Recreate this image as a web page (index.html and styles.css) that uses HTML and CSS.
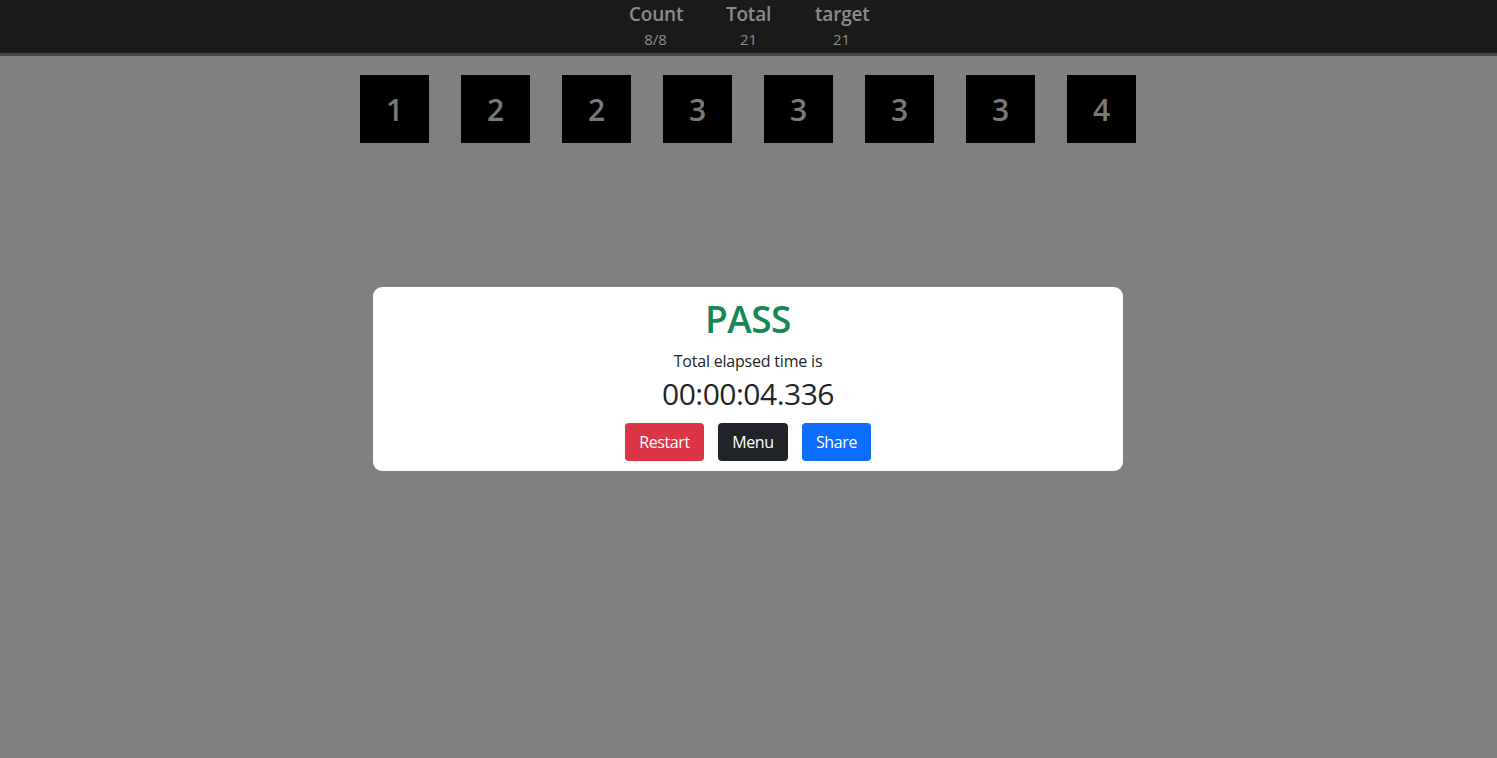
FILE: index.html
```html
<!DOCTYPE html>
<html lang="en">
<head>
    <meta charset="UTF-8">
    <meta name="viewport" content="width=device-width, initial-scale=1.0">
    <title>Count Game</title>
    <link rel="stylesheet" href="styles.css">
</head>
<body>
    <div class="topbar">
        <div class="stat">
            <div class="stat-title">Count</div>
            <div class="stat-value">8/8</div>
        </div>
        <div class="stat">
            <div class="stat-title">Total</div>
            <div class="stat-value">21</div>
        </div>
        <div class="stat">
            <div class="stat-title">target</div>
            <div class="stat-value">21</div>
        </div>
    </div>

    <div class="board">
        <div class="tile">1</div>
        <div class="tile">2</div>
        <div class="tile">2</div>
        <div class="tile">3</div>
        <div class="tile">3</div>
        <div class="tile">3</div>
        <div class="tile">3</div>
        <div class="tile">4</div>
    </div>

    <div class="backdrop">
        <div class="result">
            <h2 class="result-title">PASS</h2>
            <p class="result-label">Total elapsed time is</p>
            <div class="result-time">00:00:04.336</div>
            <div class="actions">
                <button class="btn btn-red">Restart</button>
                <button class="btn btn-dark">Menu</button>
                <button class="btn btn-blue">Share</button>
            </div>
        </div>
    </div>
</body>
</html>
```

FILE: styles.css
```css
body {
    margin: 0;
    background: #808080;
    font-family: "Open Sans", "Noto Sans", sans-serif;
    height: 758px;
    overflow: hidden;
}
.topbar {
    background: #1a1a1a;
    height: 53px;
    border-bottom: 3px solid #464646;
    display: flex;
    justify-content: center;
    gap: 40px;
}
.stat {
    width: 53px;
    text-align: center;
    color: #8c8c8c;
}
.stat-title {
    font-size: 19px;
    font-weight: 600;
    line-height: 26px;
    margin-top: 1px;
    letter-spacing: -0.2px;
}
.stat-value {
    font-size: 15px;
    line-height: 24px;
}
.board {
    display: flex;
    justify-content: center;
    gap: 32px;
    margin-top: 19px;
    padding-right: 1px;
}
.tile {
    width: 69px;
    height: 68px;
    background: #000;
    color: #7a7a7a;
    font-size: 30px;
    font-weight: 600;
    display: flex;
    align-items: center;
    justify-content: center;
}
.backdrop {
    display: flex;
    justify-content: center;
    margin-top: 144px;
    padding-right: 1px;
}
.result {
    width: 750px;
    height: 184px;
    background: #fff;
    border-radius: 9px;
    text-align: center;
    color: #212529;
    box-sizing: border-box;
    padding-top: 9px;
}
.result-title {
    margin: 0;
    color: #198754;
    font-size: 37px;
    font-weight: 600;
    line-height: 46px;
    letter-spacing: -0.5px;
}
.result-label {
    margin: 8px 0 0;
    font-size: 16px;
    line-height: 22px;
    letter-spacing: -0.2px;
}
.result-time {
    margin-top: 2px;
    font-size: 30px;
    font-weight: 500;
    line-height: 40px;
    letter-spacing: -0.5px;
}
.actions {
    display: flex;
    justify-content: center;
    gap: 14px;
    margin-top: 9px;
}
.btn {
    font-family: inherit;
    font-size: 16px;
    line-height: 24px;
    height: 38px;
    padding: 7px 12px;
    border: none;
    border-radius: 4px;
    color: #fff;
    letter-spacing: -0.4px;
}
.btn-red {
    background: #dc3545;
    width: 79px;
}
.btn-dark {
    background: #212529;
    width: 70px;
}
.btn-blue {
    background: #0d6efd;
    width: 69px;
}
```
